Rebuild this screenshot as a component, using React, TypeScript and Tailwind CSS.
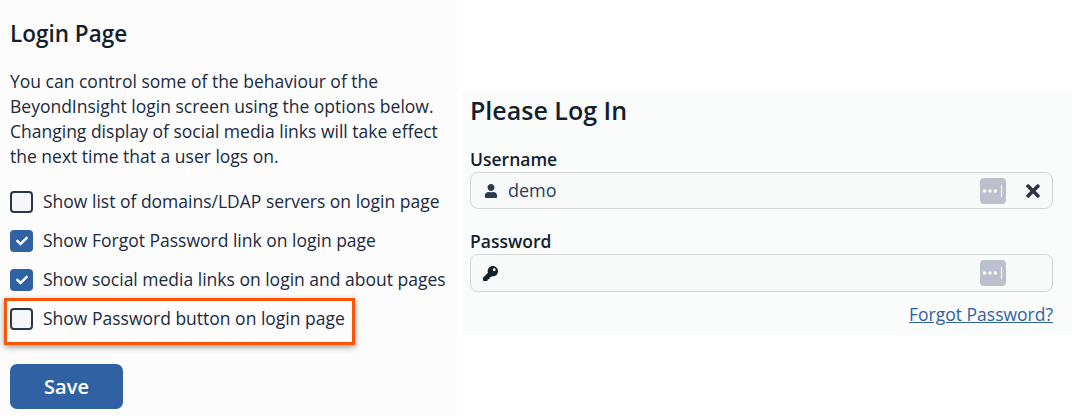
import { FaCheck, FaKey, FaTimes, FaUser } from "react-icons/fa";

const options = [
  { label: "Show list of domains/LDAP servers on login page", checked: false },
  { label: "Show Forgot Password link on login page", checked: true },
  { label: "Show social media links on login and about pages", checked: true },
  { label: "Show Password button on login page", checked: false },
];

function Checkbox({ checked }: { checked: boolean }) {
  if (checked) {
    return (
      <span className="flex h-[22px] w-[23px] shrink-0 items-center justify-center rounded-[4px] bg-[#3062a3]">
        <FaCheck className="text-[12px] text-white" />
      </span>
    );
  }
  return <span className="h-[22px] w-[23px] shrink-0 rounded-[4px] border-2 border-[#2b3645] bg-[#f4f6f8]" />;
}

function PasswordDots() {
  return (
    <span className="flex h-[26px] w-[26px] shrink-0 items-center justify-center rounded-[4px] bg-[#bcc0cc]">
      <svg width="22" height="14" viewBox="0 0 22 14" fill="white">
        <circle cx="2.5" cy="7" r="1.7" />
        <circle cx="8" cy="7" r="1.7" />
        <circle cx="13.5" cy="7" r="1.7" />
        <rect x="19" y="1" width="1" height="12" />
      </svg>
    </span>
  );
}

export default function App() {
  return (
    <div className="flex h-[416px] w-[1072px] overflow-hidden bg-white font-['Open_Sans',sans-serif] text-[#1b2a3d]">
      {/* Settings panel */}
      <div className="relative h-full w-[457px] shrink-0 bg-[#fcfcfd] px-[10px] pt-[19px]">
        <h2 className="text-[22.5px] font-semibold leading-[30px] text-[#141f2e]">Login Page</h2>
        <p className="mt-[20px] text-[17.5px] leading-[25px]">
          You can control some of the behaviour of the
          <br />
          BeyondInsight login screen using the options below.
          <br />
          Changing display of social media links will take effect
          <br />
          the next time that a user logs on.
        </p>
        <div className="mt-[21px] flex flex-col gap-[16px]">
          {options.map((option) => (
            <label key={option.label} className="flex h-[23px] items-center gap-[10px] whitespace-nowrap text-[17.5px]">
              <Checkbox checked={option.checked} />
              {option.label}
            </label>
          ))}
        </div>
        <button className="mt-[34px] h-[45px] w-[113px] rounded-[7px] bg-[#3062a3] text-[20px] font-semibold text-white">
          Save
        </button>
        {/* Callout round the last option */}
        <div className="absolute left-[4px] top-[298px] h-[47px] w-[351px] border-[3px] border-[#fb5607] shadow-[0_2px_6px_rgba(0,0,0,0.4)]" />
      </div>

      {/* Login form preview */}
      <div className="flex-1 pl-[5px] pt-[90px]">
        <div className="h-[245px] bg-[#fafbfb] pl-[8px] pr-[19px] pt-[3px]">
          <h1 className="text-[25px] font-semibold leading-[34px] text-[#141f2e]">Please Log In</h1>
          <div className="mt-[20px] text-[17.5px] font-semibold leading-[24px] text-[#141f2e]">Username</div>
          <div className="mt-[1px] flex h-[37px] items-center rounded-[8px] border border-[#d4d6da] bg-[#f8fafa] pl-[13px] pr-[9px]">
            <FaUser className="shrink-0 text-[14px] text-[#2b3b4f]" />
            <span className="ml-[10px] flex-1 text-[18px] text-[#2b3f5c]">demo</span>
            <PasswordDots />
            <FaTimes className="ml-[17px] shrink-0 text-[20px] text-[#2b3645]" />
          </div>
          <div className="mt-[20px] text-[17.5px] font-semibold leading-[24px] text-[#141f2e]">Password</div>
          <div className="mt-[1px] flex h-[38px] items-center rounded-[8px] border border-[#d4d6da] bg-[#f8fafa] pl-[12px] pr-[46px]">
            <FaKey className="shrink-0 text-[15px] text-[#141f2e]" />
            <span className="flex-1" />
            <PasswordDots />
          </div>
          <div className="mt-[10px] text-right text-[17.5px] leading-[24px]">
            <a className="text-[#3062a3] underline">Forgot Password?</a>
          </div>
        </div>
      </div>
    </div>
  );
}
